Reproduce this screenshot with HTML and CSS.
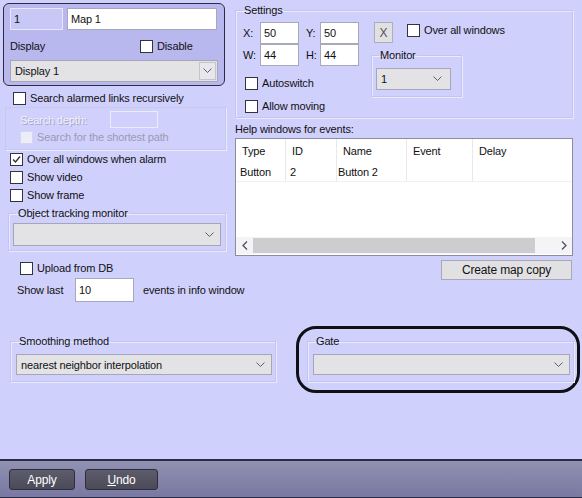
FILE: index.html
```html
<!DOCTYPE html>
<html lang="en">
<head>
  <meta charset="UTF-8" />
  <title>Map settings</title>
  <link rel="stylesheet" href="styles.css">
</head>
<body>
  <div class="page">
    <div class="top">
      <div class="left-col">
        <div class="map-panel">
          <div class="field-row">
            <div class="field id-field">1</div>
            <div class="field name-field">Map 1</div>
          </div>
          <div class="display-row">
            <span class="display-label">Display</span>
            <span class="box"></span><span class="check-text">Disable</span>
          </div>
          <div class="combo display-combo">
            <span class="combo-text">Display 1</span>
            <span class="arrow-btn"><svg width="9" height="6" viewBox="0 0 9 6"><polyline points="0.5,0.5 4.5,4.5 8.5,0.5" fill="none" stroke="#606070" stroke-width="1"/></svg></span>
          </div>
        </div>

        <div class="check-line search-links"><span class="box"></span><span class="check-text">Search alarmed links recursively</span></div>

        <div class="search-group">
          <div class="depth-row">
            <span class="disabled-label">Search depth:</span>
            <span class="field depth-field"></span>
          </div>
          <div class="check-line shortest"><span class="box disabled"></span><span class="check-text grey">Search for the shortest path</span></div>
        </div>

        <div class="check-line opt"><span class="box"><svg width="11" height="11" viewBox="0 0 11 11"><polyline points="2,5.5 4.5,8 9,2.5" fill="none" stroke="#303040" stroke-width="1.4"/></svg></span><span class="check-text">Over all windows when alarm</span></div>
        <div class="check-line opt"><span class="box"></span><span class="check-text">Show video</span></div>
        <div class="check-line opt"><span class="box"></span><span class="check-text">Show frame</span></div>

        <fieldset class="group tracking">
          <legend>Object tracking monitor</legend>
          <div class="combo tracking-combo">
            <span class="combo-text"></span>
            <svg width="9" height="6" viewBox="0 0 9 6"><polyline points="0.5,0.5 4.5,4.5 8.5,0.5" fill="none" stroke="#606070" stroke-width="1"/></svg>
          </div>
        </fieldset>

        <div class="check-line upload"><span class="box"></span><span class="check-text">Upload from DB</span></div>
        <div class="show-row">
          <span class="show-label">Show last</span>
          <div class="field last-field">10</div>
          <span class="events-text">events in info window</span>
        </div>
      </div>

      <div class="right-col">
        <fieldset class="group settings">
          <legend>Settings</legend>
          <div class="settings-body">
            <div class="xywh">
              <div class="coord-row">
                <span class="coord-label">X:</span><div class="field coord-field">50</div>
                <span class="coord-label second">Y:</span><div class="field coord-field">50</div>
              </div>
              <div class="coord-row">
                <span class="coord-label">W:</span><div class="field coord-field">44</div>
                <span class="coord-label second">H:</span><div class="field coord-field">44</div>
              </div>
              <div class="check-line autoswitch"><span class="box"></span><span class="check-text">Autoswitch</span></div>
              <div class="check-line moving"><span class="box"></span><span class="check-text">Allow moving</span></div>
            </div>
            <div class="settings-side">
              <div class="side-top">
                <div class="x-btn">X</div>
                <div class="check-line overall"><span class="box"></span><span class="check-text">Over all windows</span></div>
              </div>
              <fieldset class="group monitor">
                <legend>Monitor</legend>
                <div class="combo monitor-combo">
                  <span class="combo-text">1</span>
                  <svg width="9" height="6" viewBox="0 0 9 6"><polyline points="0.5,0.5 4.5,4.5 8.5,0.5" fill="none" stroke="#606070" stroke-width="1"/></svg>
                </div>
              </fieldset>
            </div>
          </div>
        </fieldset>

        <div class="help-label">Help windows for events:</div>
        <div class="list">
          <div class="list-row head">
            <div class="cell c1">Type</div>
            <div class="cell c2">ID</div>
            <div class="cell c3">Name</div>
            <div class="cell c4">Event</div>
            <div class="cell c5">Delay</div>
          </div>
          <div class="list-row item">
            <div class="cell c1">Button</div>
            <div class="cell c2">2</div>
            <div class="cell c3">Button 2</div>
            <div class="cell c4"></div>
            <div class="cell c5"></div>
          </div>
          <div class="hscroll">
            <span class="scroll-arrow"><svg width="6" height="9" viewBox="0 0 6 9"><polyline points="5,0.5 1,4.5 5,8.5" fill="none" stroke="#505060" stroke-width="1.3"/></svg></span>
            <span class="thumb"></span>
            <span class="scroll-arrow"><svg width="6" height="9" viewBox="0 0 6 9"><polyline points="1,0.5 5,4.5 1,8.5" fill="none" stroke="#505060" stroke-width="1.3"/></svg></span>
          </div>
        </div>
        <div class="copy-row"><div class="copy-btn">Create map copy</div></div>
      </div>
    </div>

    <div class="bottom-groups">
      <fieldset class="group smoothing">
        <legend>Smoothing method</legend>
        <div class="combo wide-combo">
          <span class="combo-text">nearest neighbor interpolation</span>
          <svg width="9" height="6" viewBox="0 0 9 6"><polyline points="0.5,0.5 4.5,4.5 8.5,0.5" fill="none" stroke="#606070" stroke-width="1"/></svg>
        </div>
      </fieldset>
      <div class="gate-mark">
        <fieldset class="group gate">
          <legend>Gate</legend>
          <div class="combo wide-combo">
            <span class="combo-text"></span>
            <svg width="9" height="6" viewBox="0 0 9 6"><polyline points="0.5,0.5 4.5,4.5 8.5,0.5" fill="none" stroke="#606070" stroke-width="1"/></svg>
          </div>
        </fieldset>
      </div>
    </div>

    <div class="footer">
      <div class="dark-btn apply">Apply</div>
      <div class="dark-btn undo"><u>U</u>ndo</div>
    </div>
  </div>
</body>
</html>
```

FILE: styles.css
```css
* {
  box-sizing: border-box;
}
body {
  margin: 0;
  font-family: 'Liberation Sans', Arial, sans-serif;
  font-size: 11px;
  letter-spacing: -0.15px;
  color: #111;
  background: #d0d0fc;
}
.page {
  width: 582px;
  height: 498px;
  display: flex;
  flex-direction: column;
  overflow: hidden;
}
.top {
  display: flex;
  height: 302px;
}
.left-col {
  width: 235px;
}
.right-col {
  width: 338px;
}

/* generic controls */
.field {
  flex: none;
  background: #fff;
  border: 1px solid #a8a8bc;
  padding-left: 3px;
  display: flex;
  align-items: center;
}
.combo {
  display: flex;
  align-items: center;
  justify-content: space-between;
  background: #e3e3e6;
  border: 1px solid #a6a6b8;
  padding: 0 6px 0 4px;
}
.box {
  width: 13px;
  height: 13px;
  flex: none;
  background: #fff;
  border: 1px solid #333340;
  display: flex;
  align-items: center;
  justify-content: center;
}
.box.disabled {
  background: #ececfa;
  border-color: #d6d6ee;
}
.check-line {
  display: flex;
  align-items: center;
}
.check-text {
  margin-left: 4px;
  white-space: nowrap;
}
.check-text.grey {
  color: #9a9ab4;
}
.group {
  margin: 0;
  border: 1px solid #c4c4ec;
  box-shadow: inset 1px 1px 0 #eaeaff, 1px 1px 0 #eaeaff;
  min-width: 0;
}
.group legend {
  padding: 0 2px;
  line-height: 14px;
  height: 14px;
}

/* map panel */
.map-panel {
  margin: 3px 0 0 3px;
  width: 222px;
  height: 83px;
  border: 1px solid #2c2c40;
  border-radius: 6px;
  background: #b8b8ee;
  padding: 4px 6px 0 6px;
}
.field-row {
  display: flex;
  gap: 4px;
  height: 22px;
}
.id-field {
  width: 53px;
  background: #c8c8f6;
  border-color: #e6e6ff;
}
.name-field {
  width: 150px;
}
.display-row {
  margin-top: 4px;
  height: 24px;
  display: flex;
  align-items: center;
}
.display-label {
  width: 130px;
  flex: none;
}
.display-combo {
  margin-top: 2px;
  width: 208px;
  height: 22px;
  padding-right: 1px;
}
.arrow-btn {
  width: 17px;
  height: 18px;
  border: 1px solid #c4c4cc;
  background: #e8e8ec;
  display: flex;
  align-items: center;
  justify-content: center;
}

/* left column */
.search-links {
  margin: 4px 0 0 13px;
  height: 16px;
}
.search-group {
  margin: 1px 0 0 5px;
  width: 221px;
  height: 43px;
  border: 1px solid #c8c8ee;
  box-shadow: 1px 1px 0 #eaeaff;
  padding-left: 14px;
}
.depth-row {
  margin-top: 3px;
  height: 17px;
  display: flex;
  align-items: center;
}
.disabled-label {
  width: 90px;
  flex: none;
  color: #f0f0ff;
  text-shadow: 1px 1px 0 #a4a4c4;
}
.depth-field {
  width: 48px;
  height: 17px;
  background: transparent;
  border-color: #ececff;
}
.shortest {
  margin-top: 2px;
  height: 14px;
}
.opt {
  margin-left: 10px;
  height: 18px;
}
.tracking {
  margin: 2px 0 0 8px;
  width: 218px;
  padding: 0 4px 4px 4px;
}
.tracking legend {
  margin-left: 3px;
}
.tracking-combo {
  margin-top: 3px;
  height: 23px;
}
.upload {
  margin: 9px 0 0 20px;
  height: 16px;
}
.show-row {
  margin-top: 2px;
  height: 24px;
  display: flex;
  align-items: center;
}
.show-label {
  margin-left: 17px;
  width: 58px;
  flex: none;
}
.last-field {
  width: 59px;
  height: 24px;
}
.events-text {
  margin-left: 9px;
  white-space: nowrap;
}

/* settings */
.settings {
  margin-top: 3px;
  width: 338px;
  padding: 0 0 3px 7px;
}
.settings legend {
  padding: 0 1px;
}
.settings-body {
  display: flex;
  margin-top: 5px;
}
.xywh {
  width: 128px;
  flex: none;
}
.coord-row {
  display: flex;
  align-items: center;
  height: 22px;
}
.coord-label {
  width: 17px;
  flex: none;
}
.coord-label.second {
  margin-left: 7px;
  width: 14px;
}
.coord-field {
  width: 39px;
  height: 22px;
}
.autoswitch {
  margin: 9px 0 0 2px;
  height: 16px;
}
.moving {
  margin: 7px 0 0 2px;
  height: 16px;
}
.side-top {
  display: flex;
  align-items: flex-start;
  height: 22px;
}
.x-btn {
  margin-left: 3px;
  width: 19px;
  height: 21px;
  background: #e1e1e4;
  border: 1px solid #adadbb;
  color: #555;
  font-size: 12px;
  display: flex;
  align-items: center;
  justify-content: center;
}
.overall {
  margin: 1px 0 0 14px;
  height: 14px;
}
.monitor {
  margin-top: 4px;
  width: 91px;
  padding: 0 4px 6px 4px;
}
.monitor legend {
  margin-left: 3px;
}
.monitor-combo {
  margin-top: 6px;
  width: 75px;
  height: 22px;
  padding-right: 8px;
}

/* list view */
.help-label {
  margin-top: 4px;
  line-height: 14px;
}
.list {
  margin-top: 2px;
  height: 118px;
  background: #fff;
  border: 1px solid #8c8c9c;
  display: flex;
  flex-direction: column;
}
.list-row {
  display: flex;
}
.list-row.head {
  height: 24px;
}
.list-row.item {
  height: 19px;
  border-bottom: 1px solid #f0f0f0;
}
.cell {
  display: flex;
  align-items: center;
  border-right: 1px solid #e8e8ea;
  padding-left: 4px;
}
.head .cell {
  padding-left: 6px;
}
.c1 { width: 50px; }
.c2 { width: 51px; }
.c3 { width: 70px; }
.c4 { width: 66px; }
.c5 { flex: 1; border-right: none; }
.item .c3 { padding-left: 1px; }
.hscroll {
  margin-top: auto;
  margin-bottom: 1px;
  height: 17px;
  display: flex;
  align-items: center;
  background: #f4f4f6;
}
.scroll-arrow {
  width: 17px;
  height: 17px;
  display: flex;
  align-items: center;
  justify-content: center;
}
.thumb {
  width: 282px;
  height: 15px;
  background: #cdcdd0;
  margin-right: auto;
}
.copy-row {
  display: flex;
  justify-content: flex-end;
  margin-top: 4px;
}
.copy-btn {
  width: 131px;
  height: 20px;
  margin-right: 1px;
  background: #e1e1e4;
  border: 1px solid #a8a8b6;
  display: flex;
  align-items: center;
  justify-content: center;
  font-size: 12px;
}

/* bottom groups */
.bottom-groups {
  display: flex;
  align-items: flex-start;
  margin-top: 24px;
}
.smoothing {
  margin: 8px 0 0 10px;
  width: 266px;
  padding: 0 3px 6px 5px;
}
.smoothing legend {
  margin-left: 1px;
}
.wide-combo {
  margin-top: 6px;
  height: 21px;
}
.gate-mark {
  margin-left: 20px;
  width: 284px;
  height: 67px;
  border: 3px solid #101014;
  border-radius: 20px;
  padding: 5px 0 0 8px;
}
.gate {
  width: 267px;
  padding: 0 3px 6px 5px;
}
.gate legend {
  margin-left: 1px;
}

/* footer */
.footer {
  margin-top: auto;
  height: 39px;
  border-top: 2px solid #2c2c44;
  border-bottom: 1px solid #2c2c44;
  background: linear-gradient(#9191b2, #7878a2);
  display: flex;
  gap: 10px;
  padding: 8px 0 0 9px;
}
.dark-btn {
  height: 21px;
  background: linear-gradient(#5c5c6c, #4a4a58);
  border: 1px solid #2e2e3c;
  border-radius: 3px;
  color: #fff;
  font-size: 12px;
  display: flex;
  align-items: center;
  justify-content: center;
}
.apply {
  width: 66px;
}
.undo {
  width: 73px;
}
```
